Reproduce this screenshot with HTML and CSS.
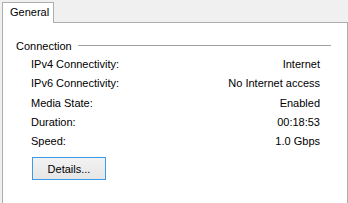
FILE: index.html
```html
<!DOCTYPE html>
<html lang="en">
<head>
    <meta charset="UTF-8">
    <title>Ethernet Status</title>
    <link rel="stylesheet" href="styles.css">
</head>
<body>
    <div class="tabs">
        <div class="tab">General</div>
    </div>
    <div class="panel">
        <div class="group-title">
            <span>Connection</span>
            <div class="rule"></div>
        </div>
        <div class="rows">
            <div class="row"><span>IPv4 Connectivity:</span><span>Internet</span></div>
            <div class="row"><span>IPv6 Connectivity:</span><span>No Internet access</span></div>
            <div class="row"><span>Media State:</span><span>Enabled</span></div>
            <div class="row"><span>Duration:</span><span>00:18:53</span></div>
            <div class="row"><span>Speed:</span><span>1.0 Gbps</span></div>
        </div>
        <button class="details-btn">Details...</button>
    </div>
</body>
</html>
```

FILE: styles.css
```css
* {
    box-sizing: border-box;
}

body {
    margin: 0;
    height: 203px;
    background: #f0f0f0;
    font-family: 'Liberation Sans', Arial, sans-serif;
    font-size: 11px;
    color: #000;
    display: flex;
    flex-direction: column;
    overflow: hidden;
}

.tabs {
    display: flex;
    padding: 2px 0 0 2px;
}

.tab {
    position: relative;
    z-index: 1;
    background: #fff;
    border: 1px solid #adadad;
    border-bottom: none;
    height: 21px;
    line-height: 19px;
    width: 52px;
    padding-left: 7px;
}

.panel {
    flex: 1;
    margin: -1px 0 0 2px;
    width: 346px;
    background: #fff;
    border: 1px solid #adadad;
    border-bottom: none;
    padding: 13px 16px 0 13px;
}

.group-title {
    display: flex;
    align-items: center;
    gap: 6px;
    height: 20px;
}

.rule {
    flex: 1;
    border-top: 1px solid #a0a0a0;
    margin-top: -1px;
}

.rows {
    padding: 0 11px 0 15px;
    margin-top: -1px;
}

.row {
    display: flex;
    justify-content: space-between;
    height: 19.3px;
    line-height: 19px;
}

.details-btn {
    margin: 6px 0 0 16px;
    width: 74px;
    height: 23px;
    font-family: inherit;
    font-size: 11px;
    color: #000;
    border: 1px solid #3c9be8;
    background: linear-gradient(#f2f2f2, #e6e6e6);
    padding: 0;
}
```
